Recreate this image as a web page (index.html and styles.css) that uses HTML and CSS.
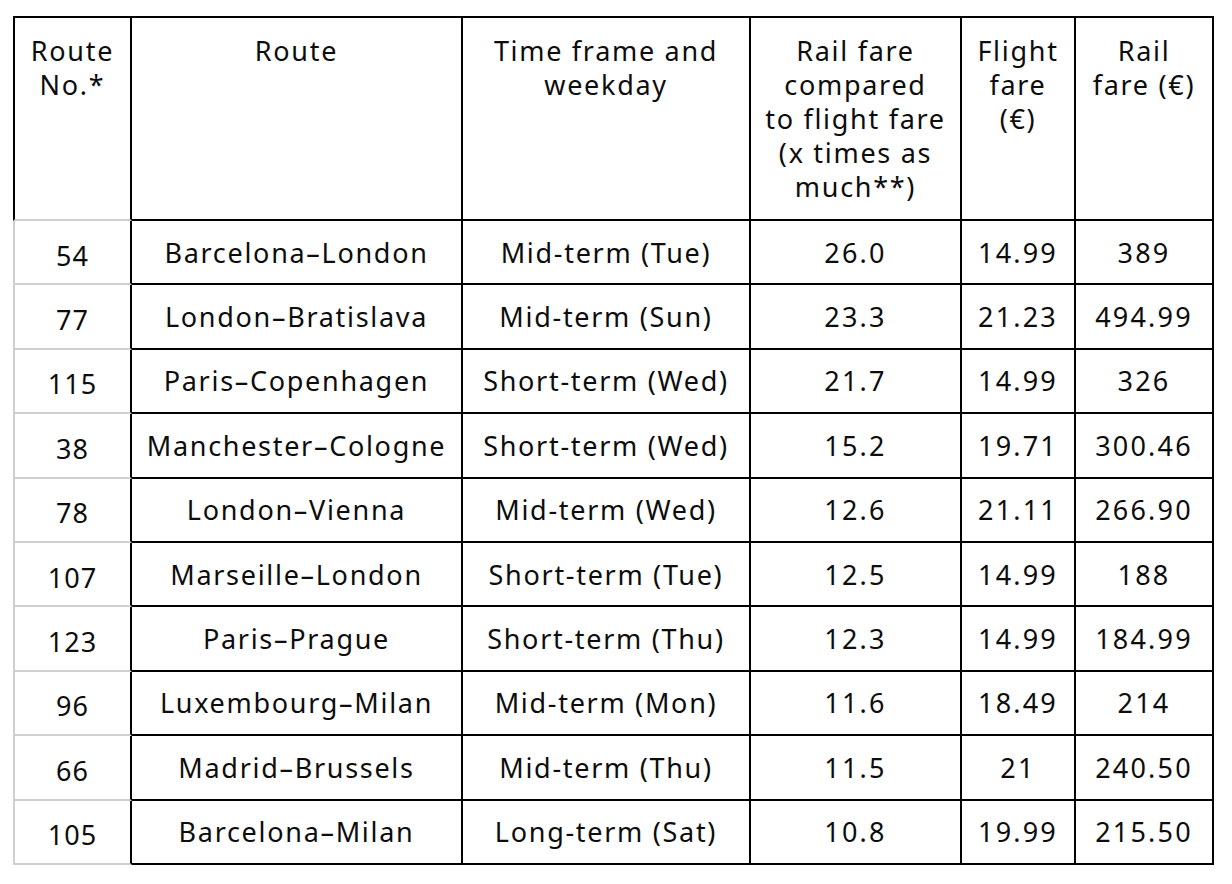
FILE: index.html
```html
<!DOCTYPE html>
<html lang="en">
<head>
<meta charset="utf-8">
<title>Rail vs flight fares</title>
<link rel="stylesheet" href="styles.css">
</head>
<body>
<table class="fares">
  <thead>
    <tr class="head-row">
      <th class="c1">Route<br>No.*</th>
      <th class="c2">Route</th>
      <th class="c3">Time frame and<br>weekday</th>
      <th class="c4">Rail fare<br>compared<br>to flight fare<br>(x times as<br>much**)</th>
      <th class="c5">Flight<br>fare<br>(€)</th>
      <th class="c6">Rail<br>fare (€)</th>
    </tr>
  </thead>
  <tbody>
    <tr><td class="num">54</td><td>Barcelona–London</td><td>Mid-term (Tue)</td><td class="n">26.0</td><td class="n">14.99</td><td class="n">389</td></tr>
    <tr><td class="num">77</td><td>London–Bratislava</td><td>Mid-term (Sun)</td><td class="n">23.3</td><td class="n">21.23</td><td class="n">494.99</td></tr>
    <tr><td class="num">115</td><td>Paris–Copenhagen</td><td>Short-term (Wed)</td><td class="n">21.7</td><td class="n">14.99</td><td class="n">326</td></tr>
    <tr><td class="num">38</td><td>Manchester–Cologne</td><td>Short-term (Wed)</td><td class="n">15.2</td><td class="n">19.71</td><td class="n">300.46</td></tr>
    <tr><td class="num">78</td><td>London–Vienna</td><td>Mid-term (Wed)</td><td class="n">12.6</td><td class="n">21.11</td><td class="n">266.90</td></tr>
    <tr><td class="num">107</td><td>Marseille–London</td><td>Short-term (Tue)</td><td class="n">12.5</td><td class="n">14.99</td><td class="n">188</td></tr>
    <tr><td class="num">123</td><td>Paris–Prague</td><td>Short-term (Thu)</td><td class="n">12.3</td><td class="n">14.99</td><td class="n">184.99</td></tr>
    <tr><td class="num">96</td><td>Luxembourg–Milan</td><td>Mid-term (Mon)</td><td class="n">11.6</td><td class="n">18.49</td><td class="n">214</td></tr>
    <tr><td class="num">66</td><td>Madrid–Brussels</td><td>Mid-term (Thu)</td><td class="n">11.5</td><td class="n">21</td><td class="n">240.50</td></tr>
    <tr><td class="num">105</td><td>Barcelona–Milan</td><td>Long-term (Sat)</td><td class="n">10.8</td><td class="n">19.99</td><td class="n">215.50</td></tr>
  </tbody>
</table>
</body>
</html>
```
FILE: styles.css
```css
html, body {
  margin: 0;
  padding: 0;
  background: #ffffff;
}

body {
  font-family: "Noto Sans", "Liberation Sans", sans-serif;
  color: #0d0d0d;
}

.fares {
  margin: 16px 0 0 13px;
  border-collapse: separate;
  border-spacing: 0;
  table-layout: fixed;
  width: 1201px;
  font-size: 27px;
  line-height: 34px;
  letter-spacing: 1.7px;
}

.fares th,
.fares td {
  box-sizing: border-box;
  padding: 0 4px;
  text-align: center;
  white-space: nowrap;
  border-right: 2px solid #000;
  border-bottom: 2px solid #000;
}

.fares th {
  font-weight: normal;
  vertical-align: top;
  border-top: 2px solid #000;
  padding-top: 16px;
}

.head-row {
  height: 205px;
}

.fares tbody tr {
  height: 64.4px;
}

.fares td {
  vertical-align: middle;
  padding-top: 1px;
}

.fares td.n {
  letter-spacing: 2.2px;
}

.fares th.c1 {
  border-left: 2px solid #000;
  border-bottom-color: #cfcfcf;
  width: 119px;
}

.c2 { width: 331px; }
.c3 { width: 288px; }
.c4 { width: 211px; }
.c5 { width: 114px; }
.c6 { width: 138px; }

.fares td.num {
  border-left: 2px solid #cfcfcf;
  border-bottom-color: #cfcfcf;
  padding-top: 7px;
  letter-spacing: 1px;
}
```
